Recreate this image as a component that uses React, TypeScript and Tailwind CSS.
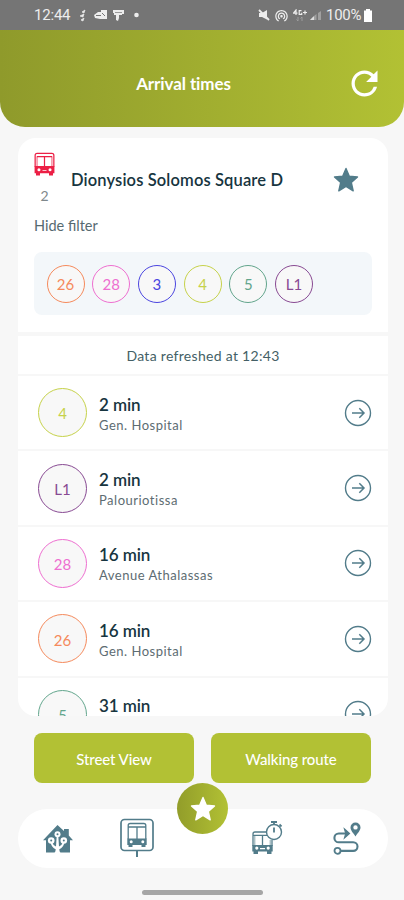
import React from 'react';
import { MdRefresh, MdWifiTethering } from 'react-icons/md';

interface Arrival {
  line: string;
  time: string;
  destination: string;
  color: string;
}

const filters = [
  { line: '26', color: 'border-[#f58a5c] text-[#f58a5c]' },
  { line: '28', color: 'border-[#ee6fd0] text-[#ee6fd0]' },
  { line: '3', color: 'border-[#4a45e0] text-[#4a45e0]' },
  { line: '4', color: 'border-[#c6d24a] text-[#c6d24a]' },
  { line: '5', color: 'border-[#62a58c] text-[#62a58c]' },
  { line: 'L1', color: 'border-[#884a93] text-[#884a93]' },
];

const arrivals: Arrival[] = [
  { line: '4', time: '2 min', destination: 'Gen. Hospital', color: 'border-[#c6d24a] text-[#c6d24a]' },
  { line: 'L1', time: '2 min', destination: 'Palouriotissa', color: 'border-[#884a93] text-[#884a93]' },
  { line: '28', time: '16 min', destination: 'Avenue Athalassas', color: 'border-[#ee6fd0] text-[#ee6fd0]' },
  { line: '26', time: '16 min', destination: 'Gen. Hospital', color: 'border-[#f58a5c] text-[#f58a5c]' },
  { line: '5', time: '31 min', destination: '', color: 'border-[#62a58c] text-[#62a58c]' },
];

const StarIcon = ({ className }: { className: string }) => (
  <svg viewBox="0 0 26 26" className={className} fill="currentColor" stroke="currentColor" strokeWidth="1.4" strokeLinejoin="round">
    <path d="M13 1.5l3.3 7.7 8.2.8-6.2 5.5 1.9 8.3-7.2-4.4-7.2 4.4 1.9-8.3L1.5 10l8.2-.8z" />
  </svg>
);

const BusIcon = ({ className }: { className: string }) => (
  <svg viewBox="0 0 22 24" className={className} fill="none" stroke="currentColor" strokeWidth="1.3">
    <path d="M1.2 15V3Q1.2.9 3.3.9h15.4q2.1 0 2.1 2.1v12M3 4.2h16M11 4.2V15" />
    <path d="M3.2 4.2V15M18.8 4.2V15" strokeWidth=".8" />
    <path
      fill="currentColor"
      stroke="none"
      fillRule="evenodd"
      d="M.6 14.2h20.8v7.6h-1.500V24h-4.200v-2.200H6.300V24H2.100v-2.200H.6zM5.200 16.500a1.600 1.600 0 1 0 0 3.200 1.600 1.600 0 0 0 0-3.200zm11.600 0a1.600 1.600 0 1 0 0 3.200 1.600 1.600 0 0 0 0-3.200zM8.900 18.200v1h4.200v-1z"
    />
  </svg>
);

const ArrowIcon = () => (
  <svg viewBox="0 0 28 28" className="size-7 text-[#527c8a]" fill="none" stroke="currentColor">
    <circle cx="14" cy="14" r="12.5" strokeWidth="1.4" />
    <path d="M8 14h12M15.300 9.300L20 14l-4.700 4.700" strokeWidth="1.500" />
  </svg>
);

const HomeIcon = () => (
  <svg viewBox="0 0 32 30" className="h-[30px] w-8">
    <path fill="#527c8a" d="M15.500 1l6.500 6V5h4.800v6.500L31 16.300h-3V28.500H4v-12.200H1z" />
    <path fill="#fff" d="M14.700 12h1.600l.7 10.500q3-1.200 3.700-4l1.600.6q-1 4.500-5 6.200 0 2 1.200 3.700h-6q1.200-1.700 1.200-3.700-4-1.700-5-6.200l1.600-.6q.7 2.800 3.700 4z" />
    <g fill="#fff">
      <circle cx="15.500" cy="10.300" r="3" />
      <circle cx="9.200" cy="16.500" r="3.300" />
      <circle cx="21.800" cy="16.500" r="3.300" />
    </g>
    <g fill="#527c8a">
      <circle cx="15.500" cy="10.300" r="1" />
      <circle cx="9.200" cy="16.500" r="1" />
      <circle cx="21.800" cy="16.500" r="1" />
    </g>
  </svg>
);

const StopIcon = () => (
  <svg viewBox="0 0 36 40" className="h-10 w-9 text-[#527c8a]" fill="none" stroke="currentColor" strokeWidth="1.700">
    <rect x="2" y="1.500" width="32" height="31" rx="3.500" />
    <path d="M18 32.500V39" strokeWidth="2" />
    <path d="M9.200 21V7.500q0-2 2-2h13.600q2 0 2 2V21M9.200 9h17.600M18 9v12" strokeWidth="1.300" />
    <path
      fill="currentColor"
      stroke="none"
      fillRule="evenodd"
      d="M8.300 20.500h19.400v6.500h-1.200v2H22.500v-2h-9v2H9.500v-2H8.300zM12.200 22.200a1.500 1.500 0 1 0 0 3 1.500 1.500 0 0 0 0-3zm11.600 0a1.500 1.500 0 1 0 0 3 1.500 1.500 0 0 0 0-3z"
    />
  </svg>
);

const TimerBusIcon = () => (
  <svg viewBox="0 0 32 36" className="h-9 w-8 text-[#527c8a]" fill="none" stroke="currentColor">
    <path d="M2 26V14q0-2 2-2h11.500M2 15.300h14M11.500 15.300V25M21 20v6" strokeWidth="1.300" />
    <path d="M3.800 15v10M19.200 20v5" strokeWidth=".7" />
    <path
      fill="currentColor"
      stroke="none"
      fillRule="evenodd"
      d="M1.300 25h20.400v6.500H20.500V34H16v-2.500H7V34H2.500v-2.500H1.300zM5.800 26.500a1.600 1.600 0 1 0 0 3.200 1.600 1.600 0 0 0 0-3.200zm11.400 0a1.600 1.600 0 1 0 0 3.200 1.600 1.600 0 0 0 0-3.200zM9 28v1.200h5V28z"
    />
    <circle cx="23" cy="12" r="7.500" strokeWidth="1.400" />
    <path d="M20 2h6M23 2v2.500M28.500 4.500l2 2M23 7.500V12.500" strokeWidth="1.800" />
  </svg>
);

const RouteIcon = () => (
  <svg viewBox="0 0 30 34" className="h-[34px] w-[30px] text-[#527c8a]" fill="none" stroke="currentColor" strokeWidth="2.100">
    <path d="M14 12.500H6.800a4.400 4.400 0 0 0 0 8.800h14.400a4.300 4.300 0 0 1 0 8.600H9" />
    <path d="M12.500 8l5 4.500-5 4.500 1.300-4.500z" fill="currentColor" strokeWidth="1.200" />
    <circle cx="5.500" cy="29.800" r="3" strokeWidth="1.800" />
    <path
      fill="currentColor"
      stroke="none"
      fillRule="evenodd"
      d="M23.500 1.500a5 5 0 0 1 5 5c0 3-2.500 5-5 9-2.500-4-5-6-5-9a5 5 0 0 1 5-5zm0 2.700a2.200 2.200 0 1 0 0 4.400 2.200 2.200 0 0 0 0-4.400z"
    />
  </svg>
);

const StatusBar = () => (
  <div className="flex h-[30px] items-center bg-[#757575] pl-[34px] pr-[31px] font-['Roboto',sans-serif] text-[15px] text-[#ededed]">
    <span className="w-[37px] whitespace-nowrap tracking-[-0.2px]">12:44</span>
    <svg viewBox="0 0 60 16" className="ml-2 h-4 w-[60px]" fill="currentColor">
      <path d="M3 5l3-2-1 3zM1 9l4-2-1 3zM2 13l3-2-1 3z" stroke="currentColor" strokeWidth=".7" />
      <path d="M15 8l4-3h3V3h6v9h-7l-5-1z" />
      <path d="M17 8.500h5M23 6l3 3" stroke="#757575" />
      <path d="M34 3h11v4h-2v1h-3v3l-1 3-2-1V8h-2V6h-1z" />
      <path d="M36 5.500h7" stroke="#757575" strokeWidth=".7" />
      <circle cx="57.500" cy="8" r="2.300" />
    </svg>
    <div className="ml-auto flex items-center">
      <svg viewBox="0 0 12 12" className="size-3" fill="currentColor">
        <path d="M1 4h3l5-3v9.500L4 8H1z" />
        <path d="M1 1l10 10" stroke="currentColor" strokeWidth="1.800" />
      </svg>
      <MdWifiTethering className="ml-1 size-[15px]" />
      <svg viewBox="0 0 14 12" className="ml-1 h-3 w-[14px]" fill="none" stroke="currentColor" strokeWidth="1.200">
        <path d="M3 6V1L.5 4.200H4.500M8.500 1.700H6.200v3.600h2.500V3.700M10 3.500h4M12 1.500v4" />
        <path d="M5 8v4M3.500 10.500L5 12M9 12V8M7.500 9.500L9 8" stroke="#a0a0a0" strokeWidth=".9" />
      </svg>
      <svg viewBox="0 0 12 11" className="ml-[3px] h-[11px] w-3" fill="#a0a0a0">
        <path d="M0 10l3-3v3zM4 6l2.500-2v6H4zM8 3l3-2v9H8z" />
        <path d="M0 10l4-4v4z" fill="#dedede" />
      </svg>
      <span className="ml-1 w-[37px] tracking-[-0.3px]">100%</span>
      <svg viewBox="0 0 10 13" className="h-[13px] w-[10px]" fill="#fff">
        <path d="M3 0h4v1.500h2V13H1V1.500h2z" />
      </svg>
    </div>
  </div>
);

const Header = () => (
  <header className="grid h-[97px] grid-cols-[1fr_38px] items-center rounded-b-[25px] bg-linear-to-r from-[#8f9a2b] to-[#b2c134] pl-[22px] pr-[21px] text-white">
    <h1 className="pt-[11px] text-center text-[17px] font-bold leading-5 tracking-[-0.1px]">Arrival times</h1>
    <MdRefresh className="mt-2.5 size-[39px]" />
  </header>
);

const App: React.FC = () => {
  return (
    <div className="flex h-[900px] w-[404px] flex-col overflow-hidden bg-[#f7f7f7] font-['Lato',sans-serif] text-[#173540]">
      <StatusBar />
      <Header />

      <main className="ml-[18px] mt-[11px] flex h-[578px] w-[370px] shrink-0 flex-col overflow-hidden rounded-[18px] bg-white">
        <section className="h-[198px] shrink-0 border-b-4 border-[#f7f7f7] px-4">
          <div className="flex h-[75px] items-start">
            <div className="flex w-[21px] flex-col items-center pt-[14px] text-[#ec1f45]">
              <BusIcon className="h-6 w-[21px]" />
              <span className="mt-[11px] text-[14px] leading-[18px] text-[#7f888c]">2</span>
            </div>
            <h2 className="ml-4 mt-8 w-[266px] whitespace-nowrap text-[16.500px] font-semibold leading-5 tracking-[0.13px]">
              Dionysios Solomos Square D
            </h2>
            <StarIcon className="-ml-1 mt-[29px] size-[26px] shrink-0 text-[#527c8a]" />
          </div>
          <p className="mt-1 text-[14.500px] leading-[18px] text-[#566970]">Hide filter</p>
          <div className="mt-[17px] flex h-[63px] items-center gap-[7.700px] rounded-lg bg-[#f3f7fa] pl-[12.500px]">
            {filters.map((filter) => (
              <span
                key={filter.line}
                className={`flex size-[38px] items-center justify-center rounded-full border-[1.500px] bg-[#f8f8f8] pt-px text-[15px] ${filter.color}`}
              >
                {filter.line}
              </span>
            ))}
          </div>
        </section>

        <p className="h-10 shrink-0 border-b-2 border-[#f7f7f7] text-center text-[14px] leading-[40px] tracking-[0.3px] text-[#445f66]">
          Data refreshed at 12:43
        </p>

        {arrivals.map((arrival, index) => (
          <div key={index} className="flex h-[75.400px] shrink-0 items-center border-b-2 border-[#f7f7f7] pl-[20px] pr-4">
            <span
              className={`flex size-[49px] items-center justify-center rounded-full border-[1.500px] bg-[#f8f8f8] pt-0.5 text-[15px] ${arrival.color}`}
            >
              {arrival.line}
            </span>
            <div className="ml-3 pt-1">
              <div className="text-[17px] font-semibold leading-[21px] tracking-[-0.1px]">{arrival.time}</div>
              <div className="h-[21px] text-[13px] leading-[21px] tracking-[0.500px] text-[#5d6c72]">{arrival.destination}</div>
            </div>
            <div className="ml-auto">
              <ArrowIcon />
            </div>
          </div>
        ))}
      </main>

      <div className="mt-[17px] grid h-[50px] shrink-0 grid-cols-2 gap-[17px] pl-[34px] pr-[33px] text-[15px] font-medium tracking-[-0.1px] text-white">
        <button className="rounded-[8px] bg-[#b2c134] pt-0.5">Street View</button>
        <button className="rounded-[8px] bg-[#b2c134] pt-0.5">Walking route</button>
      </div>

      <nav className="relative ml-[18px] mt-[26px] flex h-[59px] w-[370px] shrink-0 items-center rounded-full bg-white pl-6">
        <HomeIcon />
        <div className="-mt-0.5 ml-[45px]">
          <StopIcon />
        </div>
        <div className="absolute left-[159px] top-[-26px] flex size-[51px] items-center justify-center rounded-full bg-linear-to-r from-[#929d2a] to-[#b2c134] text-white">
          <StarIcon className="size-[26px]" />
        </div>
        <div className="-mt-0.5 ml-[96px]">
          <TimerBusIcon />
        </div>
        <div className="-mt-0.5 ml-[49px]">
          <RouteIcon />
        </div>
      </nav>
      <div className="ml-[142px] mt-[22px] h-[5px] w-[121px] shrink-0 rounded-full bg-[#a6a6a6]" />
    </div>
  );
};

export default App;
